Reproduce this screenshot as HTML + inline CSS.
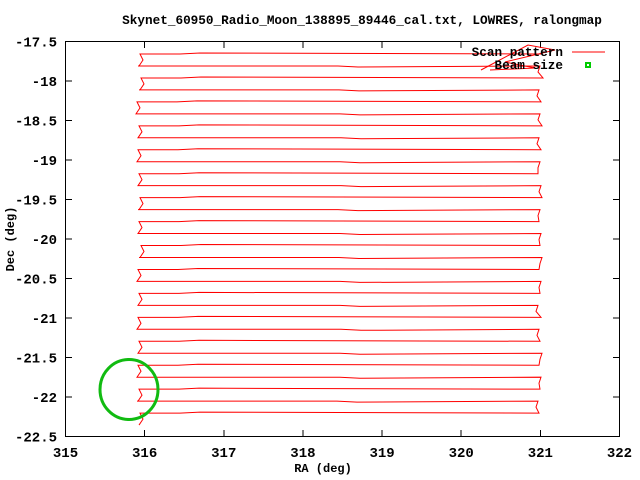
<!DOCTYPE html><html><head><style>
html,body{margin:0;padding:0;background:#fff;width:640px;height:480px;overflow:hidden}
svg text{font-family:"Liberation Mono",monospace;font-weight:bold;fill:#000}
</style></head><body>
<svg id="s" width="640" height="480" xmlns="http://www.w3.org/2000/svg">
<rect width="640" height="480" fill="#fff"/>
<text x="362" y="24" font-size="12.7" text-anchor="middle">Skynet_60950_Radio_Moon_138895_89446_cal.txt, LOWRES, ralongmap</text>
<g id="ax" stroke="#000" stroke-width="1" fill="none" shape-rendering="crispEdges">
<rect x="65.5" y="41.5" width="554" height="395"/>
</g>
<g id="lab" font-size="14"></g>
<text x="323" y="472" font-size="12" text-anchor="middle">RA (deg)</text>
<text transform="translate(14,239) rotate(-90)" font-size="12" text-anchor="middle">Dec (deg)</text>
<path id="scan" fill="none" stroke="#f00" stroke-width="1"/>
<path d="M481,70 L528,45 L555,50 L505,62 L535,68 L490,70" fill="none" stroke="#f00" stroke-width="1"/>
<text x="563" y="56" font-size="12.7" text-anchor="end">Scan pattern</text>
<line x1="572" y1="52" x2="605" y2="52" stroke="#f00"/>
<text x="563" y="69" font-size="12.7" text-anchor="end">Beam size</text>
<rect x="585" y="62" width="6" height="6" fill="#0c0"/>
<rect x="587" y="64" width="2" height="2" fill="#fff"/>
<ellipse cx="129" cy="389.5" rx="29" ry="30" fill="none" stroke="#1b1" stroke-width="3"/>
</svg>
<script>
var ax=document.getElementById('ax'),lab=document.getElementById('lab'),ns='http://www.w3.org/2000/svg';
function el(t,a,p){var e=document.createElementNS(ns,t);for(var k in a)e.setAttribute(k,a[k]);p.appendChild(e);return e;}
for(var i=0;i<=7;i++){var x=65.5+i*79.14;
 el('line',{x1:x,y1:436,x2:x,y2:430},ax);el('line',{x1:x,y1:42,x2:x,y2:48},ax);
 var t=el('text',{x:x,y:457,'text-anchor':'middle'},lab);t.textContent=315+i;}
var ys=['-17.5','-18','-18.5','-19','-19.5','-20','-20.5','-21','-21.5','-22','-22.5'];
for(var j=0;j<=10;j++){var y=41.5+j*39.5;
 el('line',{x1:66,y1:y,x2:72,y2:y},ax);el('line',{x1:619,y1:y,x2:613,y2:y},ax);
 var t=el('text',{x:57,y:y+5,'text-anchor':'end'},lab);t.textContent=ys[j];}
var d='',L=[140,138,141,139,137,140,139,141,138,140,139,141,140,138,139,140,141,139,138,140,139,140,138,141,139,140,138,140,139,137,140];
var R=[541,540,543,539,541,540,542,539,541,540,538,541,542,540,539,541,540,542,539,541,540,538,541,539,540,542,539,541,540,538,539];
for(var i=0;i<=30;i++){var y=54+i*11.97;
 if(i%2==0){ if(i==0)d+='M'+R[i]+','+y; else d+='L'+R[i]+','+y;
   d+=' L'+(L[i]+60)+','+(y-1)+' L'+(L[i]+40)+','+y+' L'+L[i]+','+y;
   d+=' L'+(L[i]+3)+','+(y+6)+' L'+(L[i]-1)+','+(y+11.97)+' ';}
 else{ d+='L'+L[i]+','+y+' L'+(L[i]+200)+','+y+' L'+(L[i]+220)+','+(y+1)+' L'+R[i]+','+y;
   if(i<30)d+=' L'+(R[i]-2)+','+(y+6)+' ';}
}
document.getElementById('scan').setAttribute('d',d);
</script>
</body></html>
